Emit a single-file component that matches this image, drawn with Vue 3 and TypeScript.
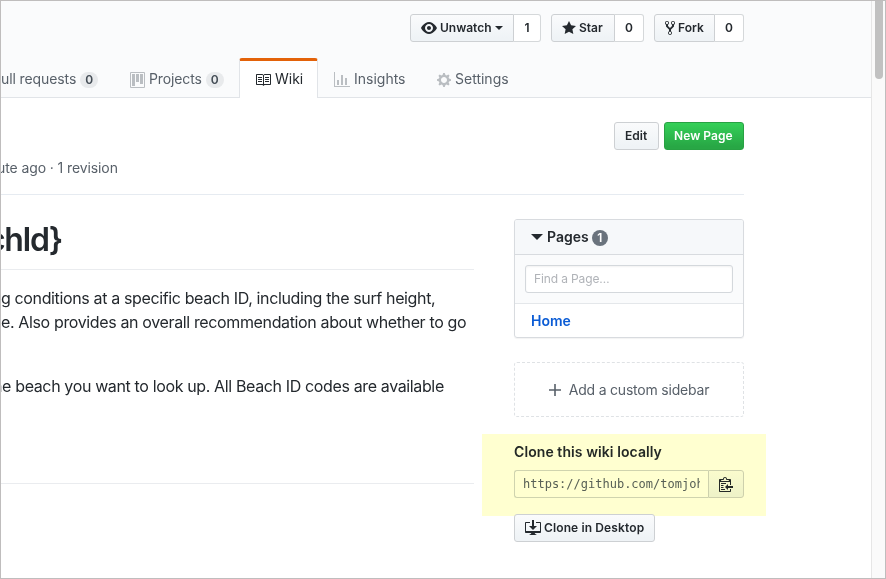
<script setup lang="ts">
import { ref } from 'vue'

interface Icon {
  width: number
  path: string
}

const icons: Record<string, Icon> = {
  eye: { width: 16, path: 'M8.06 2C3 2 0 8 0 8s3 6 8.06 6C13 14 16 8 16 8s-3-6-7.94-6zM8 12c-2.2 0-4-1.78-4-4 0-2.2 1.8-4 4-4 2.22 0 4 1.8 4 4 0 2.22-1.78 4-4 4zm2-4c0 1.11-.89 2-2 2-1.11 0-2-.89-2-2 0-1.11.89-2 2-2 1.11 0 2 .89 2 2z' },
  star: { width: 14, path: 'M14 6l-4.9-.64L7 1 4.9 5.36 0 6l3.6 3.26L2.67 14 7 11.67 11.33 14l-.93-4.74z' },
  fork: { width: 10, path: 'M8 1a1.993 1.993 0 0 0-1 3.72V6L5 8 3 6V4.72A1.993 1.993 0 0 0 2 1a1.993 1.993 0 0 0-1 3.72V6.5l3 3v1.78A1.993 1.993 0 0 0 5 15a1.993 1.993 0 0 0 1-3.72V9.5l3-3V4.72A1.993 1.993 0 0 0 8 1zM2 4.2C1.34 4.2.8 3.65.8 3c0-.65.55-1.2 1.2-1.2.65 0 1.2.55 1.2 1.2 0 .65-.55 1.2-1.2 1.2zm3 10c-.66 0-1.2-.55-1.2-1.2 0-.65.55-1.2 1.2-1.2.65 0 1.2.55 1.2 1.2 0 .65-.55 1.2-1.2 1.2zm3-10c-.66 0-1.2-.55-1.2-1.2 0-.65.55-1.2 1.2-1.2.65 0 1.2.55 1.2 1.2 0 .65-.55 1.2-1.2 1.2z' },
  project: { width: 15, path: 'M10 12h3V2h-3v10zm-4-2h3V2H6v8zm-4 4h3V2H2v12zm-1 1h13V1H1v14zM14 0H1a1 1 0 0 0-1 1v14a1 1 0 0 0 1 1h13a1 1 0 0 0 1-1V1a1 1 0 0 0-1-1z' },
  book: { width: 16, path: 'M3 5h4v1H3V5zm0 3h4V7H3v1zm0 2h4V9H3v1zm11-5h-4v1h4V5zm0 2h-4v1h4V7zm0 2h-4v1h4V9zm2-6v9c0 .55-.45 1-1 1H9.5l-1 1-1-1H2c-.55 0-1-.45-1-1V3c0-.55.45-1 1-1h5.5l1 1 1-1H15c.55 0 1 .45 1 1zm-8 .5L7.5 3H2v9h6V3.5zm7-.5H9.5l-.5.5V12h6V3z' },
  graph: { width: 16, path: 'M16 14v1H0V0h1v14h15zM5 13H3V8h2v5zm4 0H7V3h2v10zm4 0h-2V6h2v7z' },
  gear: { width: 14, path: 'M14 8.77v-1.6l-1.94-.64-.45-1.09.88-1.84-1.13-1.13-1.81.91-1.09-.45-.69-1.92h-1.6l-.63 1.94-1.11.45-1.84-.88-1.13 1.13.91 1.81-.45 1.09L0 7.23v1.59l1.94.64.45 1.09-.88 1.84 1.13 1.13 1.81-.91 1.09.45.69 1.92h1.59l.63-1.94 1.11-.45 1.84.88 1.13-1.13-.92-1.81.47-1.09L14 8.75v.02zM7 11c-1.66 0-3-1.34-3-3s1.34-3 3-3 3 1.34 3 3-1.34 3-3 3z' },
  plus: { width: 12, path: 'M12 8.8H6.8V14H5.2V8.8H0V7.2h5.2V2h1.6v5.2H12z' },
  clippy: { width: 14, path: 'M2 13h4v1H2v-1zm5-6H2v1h5V7zm2 3V8l-3 3 3 3v-2h5v-2H9zM4.5 9H2v1h2.5V9zM2 12h2.5v-1H2v1zm9 1h1v2c-.02.28-.11.52-.3.7-.19.18-.42.28-.7.3H1c-.55 0-1-.45-1-1V4c0-.55.45-1 1-1h3c0-1.11.89-2 2-2 1.11 0 2 .89 2 2h3c.55 0 1 .45 1 1v5h-1V6H1v9h10v-2zM2 5h8c0-.55-.45-1-1-1H8c-.55 0-1-.45-1-1s-.45-1-1-1-1 .45-1 1-.45 1-1 1H3c-.55 0-1 .45-1 1z' },
  download: { width: 16, path: 'M4 6h3V0h2v6h3l-4 4-4-4zm11-4h-4v1h4v8H1V3h4V2H1c-.55 0-1 .45-1 1v9c0 .55.45 1 1 1h5.34c-.25.61-.86 1.39-2.34 2h8c-1.48-.61-2.09-1.39-2.34-2H15c.55 0 1-.45 1-1V3c0-.55-.45-1-1-1z' },
}

const actions = [
  { id: 'watch', icon: 'eye', label: 'Unwatch', count: 1, caret: true },
  { id: 'star', icon: 'star', label: 'Star', count: 0, caret: false },
  { id: 'fork', icon: 'fork', label: 'Fork', count: 0, caret: false },
]

const tabs = [
  { id: 'pulls', icon: '', label: 'ull requests', count: '0' },
  { id: 'projects', icon: 'project', label: 'Projects', count: '0' },
  { id: 'wiki', icon: 'book', label: 'Wiki', count: '' },
  { id: 'insights', icon: 'graph', label: 'Insights', count: '' },
  { id: 'settings', icon: 'gear', label: 'Settings', count: '' },
]
const activeTab = ref('wiki')
const query = ref('')
</script>

<template>
  <div class="window">
    <div class="page">
      <header class="repo-head">
        <div class="actions">
          <div v-for="a in actions" :key="a.id" class="group" :class="a.id">
            <button class="btn">
              <svg class="icon" :width="icons[a.icon].width" height="16" :viewBox="`0 0 ${icons[a.icon].width} 16`"><path fill-rule="evenodd" :d="icons[a.icon].path" /></svg>
              <span class="label">{{ a.label }}</span>
              <i v-if="a.caret" class="caret"></i>
            </button>
            <span class="count">{{ a.count }}</span>
          </div>
        </div>
        <nav class="tabs">
          <a v-for="t in tabs" :key="t.id" class="tab" :class="[t.id, { active: t.id === activeTab }]" @click="activeTab = t.id">
            <svg v-if="t.icon" class="icon" :width="icons[t.icon].width" height="16" :viewBox="`0 0 ${icons[t.icon].width} 16`"><path fill-rule="evenodd" :d="icons[t.icon].path" /></svg>
            <span class="tab-label">{{ t.label }}</span>
            <span v-if="t.count" class="counter">{{ t.count }}</span>
          </a>
        </nav>
      </header>

      <main class="content">
        <div class="title-row">
          <button class="btn edit"><span>Edit</span></button>
          <button class="btn primary"><span>New Page</span></button>
        </div>
        <div class="meta"><span>ute ago · 1 revision</span></div>

        <div class="columns">
          <article class="wiki">
            <h1><span>chId}</span></h1>
            <p class="para">
              <span class="line l1">g conditions at a specific beach ID, including the surf height,</span>
              <span class="line l2">e. Also provides an overall recommendation about whether to go</span>
            </p>
            <p class="para"><span class="line l3">he beach you want to look up. All Beach ID codes are available</span></p>
            <div class="rule"></div>
          </article>

          <aside class="side">
            <section class="box">
              <div class="box-head">
                <i class="tri"></i><span class="box-title">Pages</span><span class="badge">1</span>
              </div>
              <div class="filter"><input v-model="query" class="find" placeholder="Find a Page…" /></div>
              <div class="page-link"><a>Home</a></div>
            </section>
            <a class="custom">
              <svg class="icon" width="12" height="16" viewBox="0 0 12 16"><path :d="icons.plus.path" /></svg>
              <span>Add a custom sidebar</span>
            </a>
            <section class="clone">
              <h2><span>Clone this wiki locally</span></h2>
              <div class="clone-row">
                <div class="url"><span>https://github.com/tomjoh</span></div>
                <button class="btn copy">
                  <svg class="icon" width="14" height="16" viewBox="0 0 14 16"><path fill-rule="evenodd" :d="icons.clippy.path" /></svg>
                </button>
              </div>
              <div class="highlight"></div>
            </section>
            <button class="btn desktop">
              <svg class="icon" width="16" height="16" viewBox="0 0 16 16"><path fill-rule="evenodd" :d="icons.download.path" /></svg>
              <span>Clone in Desktop</span>
            </button>
          </aside>
        </div>
      </main>
    </div>
    <div class="scrollbar"><div class="thumb"></div></div>
  </div>
</template>

<style>
body { margin: 0; overflow: hidden; }
</style>

<style scoped>
* { box-sizing: border-box; }
.window {
  width: 886px;
  height: 579px;
  border: 1px solid #bfbdbd;
  display: flex;
  overflow: hidden;
  background: #fff;
  color: #24292e;
  font-family: Inter, "Liberation Sans", sans-serif;
  font-size: 14px;
  white-space: nowrap;
}
.page { width: 870px; flex: none; overflow: hidden; }
.scrollbar { width: 14px; background: #fafafa; border-left: 1px solid #e6e6e6; padding-left: 3px; }
.thumb { width: 8px; height: 78px; background: #c1c1c1; border-radius: 0 0 4px 4px; }
.icon { fill: currentColor; flex: none; display: block; }

.repo-head { height: 97px; background: #fafbfc; border-bottom: 1px solid #e1e4e8; display: flex; flex-direction: column; justify-content: space-between; }
.actions { display: flex; gap: 10px; padding: 13px 0 0 409px; }
.group { display: flex; height: 28px; }
.btn {
  height: 28px;
  display: flex;
  align-items: center;
  padding: 0 10px;
  border: 1px solid #cdd0d3;
  border-radius: 3px;
  background: linear-gradient(#fafbfc, #eff3f6 90%);
  color: #24292e;
  font: 600 12px/18px Inter, sans-serif;
  white-space: nowrap;
}
.group .btn { border-radius: 3px 0 0 3px; gap: 3px; }
.group .icon { margin-top: -1px; }
.count {
  width: 28px;
  border: 1px solid #d5d8da;
  border-left: 0;
  border-radius: 0 3px 3px 0;
  background: #fff;
  font: 600 12px/26px Inter, sans-serif;
  text-align: center;
}
.watch .btn { width: 104px; }
.watch .count { width: 27px; }
.star .btn { width: 64px; }
.star .count { width: 29px; }
.fork .btn { width: 61px; }
.fork .count { width: 29px; }
.caret { border: 4px solid transparent; border-top-color: currentColor; border-bottom: 0; }

.tabs { display: flex; height: 40px; margin-bottom: -1px; }
.tab { display: flex; align-items: center; height: 40px; color: #586069; font-size: 14px; line-height: 20px; padding-top: 3px; }
.tab .icon { color: #babec2; }
.tab.pulls { width: 129px; }
.tab.projects { width: 109px; }
.tab.wiki { width: 79px; }
.tab.insights { width: 103px; padding-left: 16px; }
.tab.settings { padding-left: 16px; }
.tab-label { margin: -2px 0 0 4px; }
.pulls .tab-label { margin-left: 0; letter-spacing: -.1px; }
.projects .tab-label { letter-spacing: -.12px; }
.tab.active { background: #fff; color: #24292e; border: 1px solid #e1e4e8; border-top: 3px solid #e36209; border-bottom: 0; border-radius: 3px 3px 0 0; padding: 0 0 0 15px; }
.tab.active .icon { color: #24292e; }
.counter { margin-left: 4px; width: 18px; height: 16px; border-radius: 8px; background: #e8eaec; color: #444d56; font: 600 12px/16px Inter, sans-serif; text-align: center; }

.content { width: 743px; padding-top: 24px; }
.title-row { display: flex; justify-content: flex-end; gap: 5px; }
.edit { width: 45px; }
.primary { width: 80px; padding: 0 9px; letter-spacing: .06px; color: #fff; border-color: #28a143; background: linear-gradient(#34d058, #28a745 90%); }
.meta { height: 45px; padding-top: 7px; line-height: 21px; color: #586069; border-bottom: 1px solid #e6ebf1; }
.meta span { display: block; margin-left: -4px; letter-spacing: -.1px; }
.columns { display: flex; justify-content: space-between; }
.wiki { width: 473px; }
h1 { margin: 0 0 16px; height: 75px; border-bottom: 1px solid #eaecef; font-size: 32px; font-weight: 600; line-height: 40px; padding-top: 25px; }
h1 span { display: block; margin-left: -14px; letter-spacing: -1.4px; }
.para { margin: 0 0 16px; font-size: 16px; line-height: 24px; letter-spacing: -.365px; }
.line { display: block; }
.l3 { margin-left: -8px; }
.para + .para { margin-top: 40px; margin-bottom: 0; }
.rule { margin-top: 85px; border-top: 1px solid #eaecef; }

.side { width: 230px; padding-top: 24px; }
.box { height: 119px; border: 1px solid #d8dbdf; border-radius: 3px; overflow: hidden; box-shadow: 0 1px 1px rgba(0, 0, 0, .05); }
.box-head { height: 35px; display: flex; align-items: center; padding-left: 16px; background: #f6f8fa; border-bottom: 1px solid #d8dbdf; font-weight: 600; }
.box-title { margin-top: -1px; }
.tri { border: 6px solid transparent; border-top: 6px solid #24292e; border-bottom: 0; margin-right: 4px; }
.badge { width: 16px; height: 16px; border-radius: 8px; margin: 1px 0 0 3px; background: #6a737d; color: #fff; font-size: 12px; line-height: 16px; text-align: center; }
.filter { height: 49px; padding: 10px; background: #fafbfc; border-bottom: 1px solid #e4e7ea; }
.find { display: block; width: 208px; height: 28px; border: 1px solid #d4d8dc; border-radius: 3px; padding: 0 8px 1px; background: #fff; box-shadow: inset 0 1px 2px rgba(27, 31, 35, .06); font: 12px Inter, sans-serif; letter-spacing: -.12px; }
.find::placeholder { color: #b0b3b8; }
.page-link { height: 34px; padding-left: 16px; font-weight: 600; line-height: 34px; color: #0b5cd5; }
.custom { margin-top: 24px; height: 55px; display: flex; align-items: center; justify-content: center; gap: 8px; border: 1px dashed #dfe2e5; border-radius: 3px; color: #586069; letter-spacing: -.2px; }
.clone { position: relative; margin-top: 17px; height: 80px; padding-top: 8px; }
.highlight { position: absolute; left: -32px; top: 0; width: 284px; height: 82px; background: #ffffd0; mix-blend-mode: multiply; pointer-events: none; }
h2 { margin: 0 0 8px; font-size: 14px; font-weight: 600; line-height: 20px; letter-spacing: .08px; }
.clone-row { display: flex; }
.url { width: 194px; height: 28px; border: 1px solid #cfd3d6; border-right: 0; border-radius: 3px 0 0 3px; padding: 0 8px; font: 12px/26px "DejaVu Sans Mono", monospace; color: #586069; }
.url span { display: block; overflow: hidden; }
.copy { width: 36px; border-radius: 0 3px 3px 0; padding-left: 10px; }
.desktop { position: relative; z-index: 1; width: 141px; gap: 3px; letter-spacing: .12px; }
</style>
